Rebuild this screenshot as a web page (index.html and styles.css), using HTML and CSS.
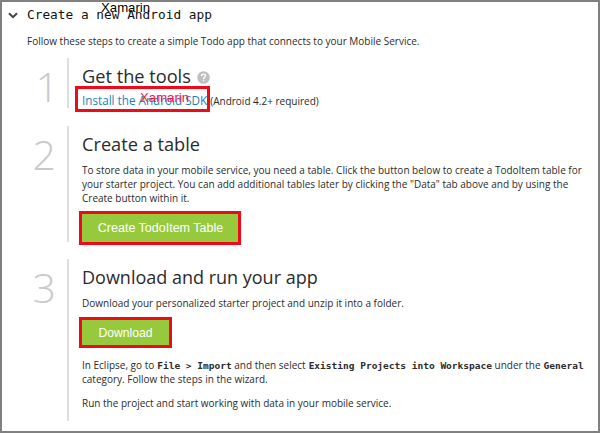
FILE: index.html
```
<!DOCTYPE html>
<html lang="en">
<head>
<meta charset="utf-8">
<title>Create a new Android app</title>
<link rel="stylesheet" href="styles.css">
</head>
<body>
<main class="frame">
  <header class="top">
    <svg class="chevron" width="10" height="7" viewBox="0 0 10 7"><path d="M1 1.2 5 5.2 9 1.2" fill="none" stroke="#444" stroke-width="2"/></svg>
    <h1 class="title">Create a new Android app</h1>
    <span class="note note-black">Xamarin</span>
  </header>
  <p class="intro">Follow these steps to create a simple Todo app that connects to your Mobile Service.</p>

  <section class="step step-one">
    <div class="num">1</div>
    <div class="content">
      <h2>Get the tools <svg class="help" width="13" height="13" viewBox="0 0 13 13"><circle cx="6.5" cy="6.5" r="6.3" fill="#bfbfbf"/><path d="M4.5 5C4.5 2.5 8.5 2.5 8.5 4.8 8.5 6.2 6.6 6.2 6.6 7.9M6.6 8.8V10.3" fill="none" stroke="#fff" stroke-width="1.4"/></svg></h2>
      <p class="install"><a class="link">Install the Android SDK</a><span class="req">(Android 4.2+ required)</span></p>
      <span class="mark mark-link"></span>
      <span class="note note-red">Xamarin</span>
    </div>
  </section>

  <section class="step step-two">
    <div class="num">2</div>
    <div class="content">
      <h2 class="h-table">Create a table</h2>
      <p>To store data in your mobile service, you need a table. Click the button below to create a TodoItem table for<br><span class="wide">your starter project. You can add additional tables later by clicking the "Data" tab above and by using the</span><br>Create button within it.</p>
      <button class="btn btn-table">Create TodoItem Table</button>
    </div>
  </section>

  <section class="step step-three">
    <div class="num">3</div>
    <div class="content">
      <h2 class="h-run">Download and run your app</h2>
      <p>Download your personalized starter project and unzip it into a folder.</p>
      <button class="btn btn-download">Download</button>
      <p class="guide">In Eclipse, go to <code>File &gt; Import</code> and then select <code>Existing Projects into Workspace</code> under the <code>General</code><br>category. Follow the steps in the wizard.</p>
      <p class="run">Run the project and start working with data in your mobile service.</p>
    </div>
  </section>
</main>
</body>
</html>
```
FILE: styles.css
```
* { box-sizing: border-box; }
body { margin: 0; }
h1, h2, p { margin: 0; font-weight: 400; }

.frame {
  width: 600px;
  height: 433px;
  border: 2px solid #808080;
  background: #fff;
  color: #2b2b2b;
  font: 10px/14px "Open Sans", sans-serif;
  white-space: nowrap;
  overflow: hidden;
}

.top {
  position: relative;
  display: flex;
  align-items: center;
  height: 26px;
  padding-left: 6px;
}
.title {
  margin-left: 9px;
  font: 12.8px/18px "DejaVu Sans Mono", monospace;
  color: #111;
}
.note {
  position: absolute;
  font: 13.2px/15px "Liberation Sans", sans-serif;
}
.note-black { left: 99px; top: -2px; color: #000; }
.note-red { left: 71px; top: 32px; color: #ff1237; }

.intro { padding: 6px 0 0 25px; }

.step {
  display: grid;
  grid-template-columns: 65px 1fr;
  grid-template-rows: 100%;
}
.step-one { margin-top: 10px; height: 50px; }
.step-two { margin-top: 18px; height: 116px; }
.step-three { margin-top: 17px; height: 162px; }

.num {
  padding: 3px 11px 0 0;
  text-align: right;
  font: 300 41px/50px "Open Sans", sans-serif;
  color: #c9c9c9;
}
.step-one .num { padding-right: 8px; }
.content {
  position: relative;
  border-left: 2px solid #dedede;
  padding: 6px 0 0 13px;
}

h2 {
  margin-bottom: 7px;
  font-size: 18.2px;
  line-height: 24px;
}
.step-one h2 { margin-bottom: 4px; }
.h-run { font-size: 18px; }
.help { margin-left: 1px; vertical-align: -1px; }

.install { line-height: 16px; }
.link { font-size: 11.7px; color: #1f7fb8; }
.req { margin-left: 3px; }
.wide { letter-spacing: 0.005px; }

.mark-link {
  position: absolute;
  left: 6px;
  top: 28px;
  width: 135px;
  height: 26px;
  border: 3px solid #f00a19;
}

.btn {
  display: block;
  margin: 9px 0 0;
  padding: 0 0 0 1px;
  border: 0;
  outline: 3px solid #f00a19;
  background: #97c93d;
  color: #fff;
  font: 12.5px "Liberation Sans", sans-serif;
}
.btn-table { width: 156px; height: 28px; }
.btn-download { margin-top: 10px; width: 87px; height: 25px; padding: 0; font-size: 12.2px; }

.guide { margin-top: 13px; }
.run { margin-top: 10px; }
code { margin-left: 0.4px; font: bold 9.53px/1 "DejaVu Sans Mono", monospace; }
```
